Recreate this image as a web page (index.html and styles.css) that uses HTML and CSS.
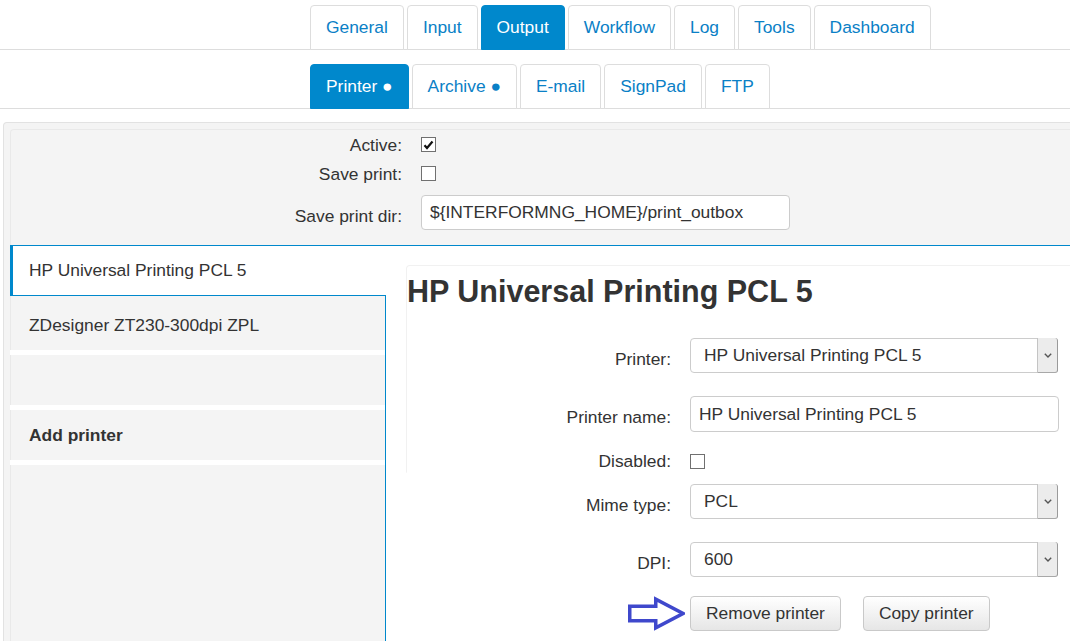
FILE: index.html
```html
<!DOCTYPE html>
<html>
<head>
<meta charset="utf-8">
<title>Output - Printer</title>
<link rel="stylesheet" href="styles.css">
</head>
<body>
<nav class="tabs tabs-main">
  <a class="tab">General</a>
  <a class="tab">Input</a>
  <a class="tab active">Output</a>
  <a class="tab">Workflow</a>
  <a class="tab">Log</a>
  <a class="tab">Tools</a>
  <a class="tab">Dashboard</a>
</nav>
<nav class="tabs tabs-sub">
  <a class="tab active">Printer ●</a>
  <a class="tab">Archive ●</a>
  <a class="tab">E-mail</a>
  <a class="tab">SignPad</a>
  <a class="tab">FTP</a>
</nav>

<div class="panel">
  <div class="well">
    <div class="form-top">
      <div class="row row-check">
        <label class="lbl">Active:</label>
        <span class="cb"><svg width="11" height="10" viewBox="0 0 11 10"><path d="M1.5 5.2 L4 8 L9.5 1.5" fill="none" stroke="#111" stroke-width="2.2"/></svg></span>
      </div>
      <div class="row row-check gap14">
        <label class="lbl">Save print:</label>
        <span class="cb"></span>
      </div>
      <div class="row row-field gap14">
        <label class="lbl lbl-field">Save print dir:</label>
        <div class="input input-dir">${INTERFORMNG_HOME}/print_outbox</div>
      </div>
    </div>

    <div class="tabbable">
      <ul class="side-nav">
        <li class="side-item active">HP Universal Printing PCL 5</li>
        <li class="side-item">ZDesigner ZT230-300dpi ZPL</li>
        <li class="side-item"></li>
        <li class="side-item strong">Add printer</li>
      </ul>
      <div class="pane">
        <div class="card">
          <h2 class="title">HP Universal Printing PCL 5</h2>

          <div class="frow">
            <label class="flabel lbl-field">Printer:</label>
            <div class="select">
              <span class="select-text">HP Universal Printing PCL 5</span>
              <span class="select-btn"><svg width="8" height="5" viewBox="0 0 8 5"><polyline points="0.8,0.8 4,4 7.2,0.8" fill="none" stroke="#555" stroke-width="1.4"/></svg></span>
            </div>
          </div>

          <div class="frow gap23">
            <label class="flabel lbl-field">Printer name:</label>
            <div class="input input-name">HP Universal Printing PCL 5</div>
          </div>

          <div class="frow frow-check gap19">
            <label class="flabel">Disabled:</label>
            <span class="cb"></span>
          </div>
        </div>

        <div class="form-rest">
          <div class="frow">
            <label class="flabel lbl-field">Mime type:</label>
            <div class="select">
              <span class="select-text">PCL</span>
              <span class="select-btn"><svg width="8" height="5" viewBox="0 0 8 5"><polyline points="0.8,0.8 4,4 7.2,0.8" fill="none" stroke="#555" stroke-width="1.4"/></svg></span>
            </div>
          </div>

          <div class="frow gap23">
            <label class="flabel lbl-field">DPI:</label>
            <div class="select">
              <span class="select-text">600</span>
              <span class="select-btn"><svg width="8" height="5" viewBox="0 0 8 5"><polyline points="0.8,0.8 4,4 7.2,0.8" fill="none" stroke="#555" stroke-width="1.4"/></svg></span>
            </div>
          </div>

          <div class="frow gap18">
            <div class="flabel arrow-cell">
              <svg class="arrow" width="58" height="36" viewBox="0 0 58 36"><path d="M2.75 11.25 H28.75 V4.25 L56 18.5 L28.75 32.75 V25.75 H2.75 Z" fill="none" stroke="#3f48cc" stroke-width="3.5" stroke-linejoin="miter"/></svg>
            </div>
            <button class="btn">Remove printer</button>
            <button class="btn">Copy printer</button>
          </div>
        </div>
      </div>
    </div>
  </div>
</div>
</body>
</html>
```

FILE: styles.css
```css
html, body {
  margin: 0;
  padding: 0;
  background: #fff;
  overflow: hidden;
}

body {
  width: 1070px;
  height: 641px;
  font-family: "Liberation Sans", Arial, sans-serif;
  font-size: 17.4px;
  color: #333;
}

/* ---------- tab bars ---------- */
.tabs {
  display: flex;
  padding-left: 310px;
  height: 44px;
  border-bottom: 1px solid #ddd;
}

.tabs-main { margin-top: 5px; }
.tabs-sub { margin-top: 14px; }

.tab {
  box-sizing: border-box;
  height: 45px;
  line-height: 43px;
  padding: 0 15px;
  margin-right: 3px;
  border: 1px solid #ddd;
  border-radius: 4px 4px 0 0;
  background: #fff;
  color: #0a80c6;
  white-space: nowrap;
  cursor: pointer;
}

.tab.active {
  background: #0088cc;
  border-color: #0088cc;
  color: #fff;
}

/* ---------- panel ---------- */
.panel {
  box-sizing: border-box;
  margin: 13px 0 0 3px;
  width: 1100px;
  height: 519px;
  padding: 6px 6px 0 6px;
  border: 1px solid #e2e2e2;
  border-bottom: none;
  border-radius: 4px 4px 0 0;
  background: #f4f4f4;
}

.well {
  box-sizing: border-box;
  display: flex;
  flex-direction: column;
  height: 100%;
  border: 1px solid #e9e9e9;
  border-bottom: none;
  border-radius: 4px 4px 0 0;
}

.form-top {
  padding: 7px 0 15px 0;
}

.row {
  display: flex;
  align-items: center;
}

.row-check { height: 15px; }
.row-field { height: 35px; }

.gap14 { margin-top: 14px; }
.gap18 { margin-top: 18px; }
.gap19 { margin-top: 19px; }
.gap23 { margin-top: 23px; }

.lbl {
  width: 391px;
  margin-right: 19px;
  text-align: right;
  line-height: 20px;
  flex: none;
}

.lbl-field { padding-top: 6px; }

.cb {
  box-sizing: border-box;
  width: 15px;
  height: 15px;
  border: 1px solid #707070;
  background: #fff;
  display: flex;
  align-items: center;
  justify-content: center;
  flex: none;
}

.input {
  box-sizing: border-box;
  border: 1px solid #ccc;
  border-radius: 4px;
  background: #fff;
  padding-left: 8px;
  white-space: nowrap;
}

.input-dir {
  width: 369px;
  height: 35px;
  line-height: 33px;
}

.input-name {
  width: 369px;
  height: 36px;
  line-height: 34px;
}

/* ---------- printers area ---------- */
.tabbable {
  flex: 1;
  display: flex;
  margin-left: -1px;
  border-top: 1px solid #0088cc;
  min-height: 0;
}

.side-nav {
  list-style: none;
  margin: 0;
  padding: 0;
  box-sizing: border-box;
  width: 376px;
  flex: none;
  border-right: 1px solid #0088cc;
}

.side-item {
  height: 50px;
  line-height: 50px;
  padding-left: 19px;
  border-bottom: 5px solid #fff;
  white-space: nowrap;
}

.side-item.active {
  position: relative;
  z-index: 1;
  height: 49px;
  line-height: 49px;
  padding-left: 16px;
  margin-right: -1px;
  margin-bottom: 4px;
  background: #fff;
  border-left: 3px solid #0088cc;
  border-bottom: 1px solid #0088cc;
}

.side-item.strong { font-weight: bold; }

.pane {
  flex: 1;
  background: #fff;
  padding: 19px 0 0 20px;
}

.card {
  border: 1px solid #f1f1f1;
  border-bottom-color: transparent;
  border-radius: 4px 4px 0 0;
  padding-bottom: 1px;
}

.form-rest {
  padding-left: 1px;
  margin-top: 11px;
}

.title {
  margin: 8px 0 30px 0;
  font-size: 30.5px;
  line-height: 34px;
  font-weight: bold;
  color: #333;
}

.frow {
  display: flex;
  align-items: center;
}

.frow-check { height: 20px; }

.flabel {
  width: 264px;
  margin-right: 19px;
  text-align: right;
  line-height: 20px;
  flex: none;
}

.select {
  box-sizing: border-box;
  width: 368px;
  height: 35px;
  border: 1px solid #ccc;
  border-radius: 4px;
  background: #fff;
  display: flex;
}

.select-text {
  flex: 1;
  padding-left: 13px;
  line-height: 33px;
  white-space: nowrap;
}

.select-btn {
  width: 19px;
  border-left: 1px solid #c4c4c4;
  border-right: 1px solid #9a9a9a;
  border-bottom: 1px solid #a8a8a8;
  margin: -1px -1px -1px 0;
  border-radius: 0 3px 3px 0;
  background: #ececec;
  display: flex;
  align-items: center;
  justify-content: center;
}

.arrow-cell {
  display: flex;
  justify-content: flex-end;
}

.arrow {
  display: block;
  margin-right: -14px;
}

.btn {
  box-sizing: border-box;
  height: 35px;
  padding: 0 15px;
  margin-right: 22px;
  border: 1px solid #c9c9c9;
  border-radius: 4px;
  background: linear-gradient(#ffffff, #e6e6e6);
  font-family: inherit;
  font-size: 17.4px;
  color: #333;
  line-height: 33px;
  white-space: nowrap;
}
```
